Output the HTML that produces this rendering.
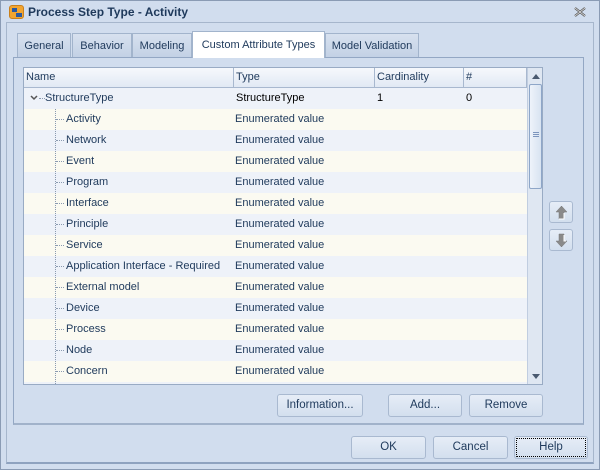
<!DOCTYPE html>
<html><head><style>
*{box-sizing:border-box;margin:0;padding:0}
body{width:600px;height:470px;background:#d1ddee;font-family:"Liberation Sans",sans-serif;font-size:11px;color:#1e395b;position:relative;overflow:hidden}
.abs{position:absolute}
.win{left:0;top:0;width:600px;height:470px;border:1px solid #8a9bb4}
.title{left:28px;top:5px;font-weight:bold;font-size:12px;color:#1e395b}
.frame{left:6px;top:22px;width:588px;height:442px;border:1px solid #a6b6cc;border-bottom:2px solid #8ea2bf}
.tab{top:33px;height:24px;background:linear-gradient(#d7e1ef,#c3d1e5);border:1px solid #a2b4cc;border-bottom:none;padding-top:6px;text-align:center;color:#1e395b}
.tab.act{top:31px;height:27px;background:#fff;padding-top:7px;z-index:2}
.panel{left:13px;top:57px;width:571px;height:368px;border:1px solid #93a7c4;border-bottom:2px solid #a1b2ca;background:#d1ddee}
.grid{left:23px;top:67px;width:520px;height:318px;border:1px solid #99abc4;background:#eef2f9;overflow:hidden}
.hdr{position:absolute;top:0;height:20px;background:linear-gradient(#f6f8fc,#e1e9f4);border-right:1px solid #a8b8cf;border-bottom:1px solid #a8b8cf;padding:3px 0 0 2px}
.row{position:absolute;left:0;width:503px;height:21px}
.row span{position:absolute;top:4px}
.btn{height:23px;border:1px solid #a9b9d0;border-radius:3px;background:linear-gradient(#e6edf7,#d3dfee);text-align:center;padding-top:4px;font-size:11.5px}
</style></head><body>
<div class="abs win"></div>
<div class="abs" style="left:9px;top:5px;width:15px;height:14px;border-radius:3px;background:#f2a530;border:1px solid #c9801c"><div class="abs" style="left:2px;top:2px;width:5px;height:4px;background:#2b5aa0"></div><div class="abs" style="left:6px;top:7px;width:6px;height:4px;background:#2b5aa0"></div></div>
<div class="abs title">Process Step Type - Activity</div>
<svg class="abs" style="left:574px;top:7px" width="12" height="10" viewBox="0 0 12 10"><path d="M1 1L11 9M11 1L1 9" stroke="#555" stroke-width="2.2" fill="none"/><path d="M1 1L11 9M11 1L1 9" stroke="#eee" stroke-width="0.8" fill="none"/></svg>
<div class="abs frame"></div>
<div class="abs tab" style="left:17px;width:54px">General</div>
<div class="abs tab" style="left:72px;width:60px">Behavior</div>
<div class="abs tab" style="left:132px;width:60px">Modeling</div>
<div class="abs tab act" style="left:192px;width:133px">Custom Attribute Types</div>
<div class="abs tab" style="left:325px;width:94px">Model Validation</div>
<div class="abs panel"></div>
<div class="abs grid">
<div class="hdr" style="left:0;width:210px">Name</div>
<div class="hdr" style="left:210px;width:141px">Type</div>
<div class="hdr" style="left:351px;width:89px">Cardinality</div>
<div class="hdr" style="left:440px;width:63px">#</div>
<div class="abs" style="left:503px;top:0;width:16px;height:318px;background:#dfe7f2;border-left:1px solid #c0cde0">
<div class="abs" style="left:4px;top:6px;border:4px solid transparent;border-bottom:5px solid #4a5a70;border-top:none"></div>
<div class="abs" style="left:1px;top:16px;width:13px;height:105px;border:1px solid #8ea6c8;border-radius:2px;background:linear-gradient(90deg,#eef3fa,#d8e3f1)"><div class="abs" style="left:3px;top:47px;width:6px;height:5px;border-top:1px solid #7c95bd;border-bottom:1px solid #7c95bd"></div><div class="abs" style="left:3px;top:49px;width:6px;height:1px;background:#7c95bd"></div></div>
<div class="abs" style="left:4px;top:306px;border:4px solid transparent;border-top:5px solid #4a5a70;border-bottom:none"></div>
</div>
<div class="row" style="top:20px;background:#eef2f9"><svg class="abs" style="left:6px;top:7px" width="8" height="6" viewBox="0 0 8 6"><path d="M1 1L4 4L7 1" stroke="#555" stroke-width="1.5" fill="none"/></svg><span style="left:15px;top:10px;width:6px;border-top:1px dotted #8a9ab0"></span><span style="left:21px">StructureType</span><span style="left:212px;color:#000">StructureType</span><span style="left:353px;color:#000">1</span><span style="left:442px;color:#000">0</span></div>
<div id="rows"></div>
<div class="abs" style="left:31px;top:41px;height:277px;border-left:1px dotted #8a9ab0"></div>
</div>
<script>
var n=["Activity","Network","Event","Program","Interface","Principle","Service","Application Interface - Required","External model","Device","Process","Node","Concern",""];
var h="";for(var i=0;i<n.length;i++){var t=41+i*21;h+='<div class="row" style="top:'+t+'px;background:'+(i%2?'#eef2f9':'#fbfaf1')+'">'+(n[i]?'<span style="left:32px;top:10px;width:8px;border-top:1px dotted #8a9ab0"></span><span style="left:42px">'+n[i]+'</span><span style="left:211px">Enumerated value</span>':'')+'</div>';}
document.getElementById("rows").innerHTML=h;
</script>
<div class="abs btn" style="left:549px;top:201px;width:24px;height:22px;padding:0"><svg class="abs" style="left:5px;top:3px" width="13" height="15" viewBox="0 0 13 15"><path d="M6.5 1L12 7H9V14H4V7H1Z" fill="#8a8a8a" stroke="#777" stroke-width="0.5"/><path d="M9 8V14H4" stroke="#fff" fill="none"/></svg></div>
<div class="abs btn" style="left:549px;top:229px;width:24px;height:22px;padding:0"><svg class="abs" style="left:5px;top:3px" width="13" height="15" viewBox="0 0 13 15"><path d="M4 1H9V8H12L6.5 14L1 8H4Z" fill="#8a8a8a" stroke="#777" stroke-width="0.5"/><path d="M9 2V8H11" stroke="#fff" fill="none"/></svg></div>
<div class="abs btn" style="left:277px;top:394px;width:86px">Information...</div>
<div class="abs btn" style="left:388px;top:394px;width:74px">Add...</div>
<div class="abs btn" style="left:469px;top:394px;width:74px">Remove</div>
<div class="abs btn" style="left:351px;top:436px;width:75px">OK</div>
<div class="abs btn" style="left:433px;top:436px;width:75px">Cancel</div>
<div class="abs btn" style="left:514px;top:436px;width:74px;outline:1px dotted #000;outline-offset:-3px">Help</div>
</body></html>
